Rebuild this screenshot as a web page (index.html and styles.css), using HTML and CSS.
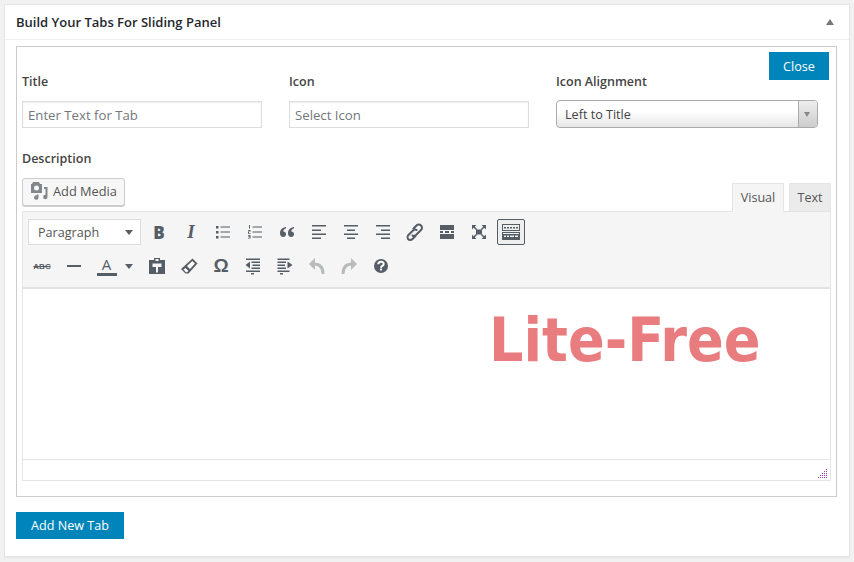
FILE: index.html
```html
<!DOCTYPE html>
<html lang="en">
<head>
    <meta charset="UTF-8">
    <title>Build Your Tabs For Sliding Panel</title>
    <link rel="stylesheet" href="styles.css">
</head>
<body>
    <div class="panel">
        <div class="panelHead">
            <h2 class="panelTitle">Build Your Tabs For Sliding Panel</h2>
            <span class="collapseArrow"></span>
        </div>
        <div class="panelBody">
            <div class="tabBox">
                <div class="closeRow"><button class="blueBtn closeBtn">Close</button></div>
                <div class="fieldRow">
                    <div class="field">
                        <label class="fieldLabel">Title</label>
                        <div class="textInput placeholder">Enter Text for Tab</div>
                    </div>
                    <div class="field">
                        <label class="fieldLabel">Icon</label>
                        <div class="textInput placeholder">Select Icon</div>
                    </div>
                    <div class="field">
                        <label class="fieldLabel">Icon Alignment</label>
                        <div class="selectBox">
                            <span class="selectValue">Left to Title</span>
                            <span class="selectArrow"></span>
                        </div>
                    </div>
                </div>
                <label class="fieldLabel descLabel">Description</label>
                <div class="editorTop">
                    <button class="mediaBtn">
                        <svg width="18" height="18" viewBox="0 0 18 18"><path fill="#82878c" fill-rule="evenodd" d="M3 0h6l1 2h2v9H1V2h1zM6.500 3.500a2.500 2.500 0 1 0 0 5 2.500 2.500 0 0 0 0-5zM14 5h3.500v10a2.200 2.200 0 1 1-2-2.200V7H14zM8.500 12.500v3a2.200 2.200 0 1 1-1.700-2.100v-.900z"/></svg>
                        <span>Add Media</span>
                    </button>
                    <div class="tabs">
                        <span class="tab tabActive">Visual</span>
                        <span class="tab tabPlain">Text</span>
                    </div>
                </div>
                <div class="editor">
                    <div class="toolbar">
                        <div class="toolRow">
                            <div class="formatSelect"><span>Paragraph</span><i class="formatCaret"></i></div>
                            <span class="tool glyph boldGlyph">B</span>
                            <span class="tool glyph italicGlyph">I</span>
                            <span class="tool"><svg width="20" height="20" viewBox="0 0 20 20"><path fill="#555d66" d="M3 4h2.500v2.500H3zM3 9h2.500v2.500H3zM3 14h2.500v2.500H3zM7.500 4.500H17v1H7.500zM7.500 9.500H17v1H7.500zM7.500 14.500H17v1H7.500z"/></svg></span>
                            <span class="tool"><svg width="20" height="20" viewBox="0 0 20 20"><path fill="#555d66" d="M7.500 4.500H17v1H7.500zM7.500 9.500H17v1H7.500zM7.500 14.500H17v1H7.500zM4 3h1v3.500H4zM3 8h2.500v1.800H4V11h1.500v.700H3V9.500h1.500V8.700H3zM3 13h2.500v3.500H3v-.700h1.500V15H3v-.500h1.500v-.800H3z"/></svg></span>
                            <span class="tool"><svg width="20" height="20" viewBox="0 0 20 20"><path fill="#555d66" d="M9 5v1.300C6.800 7 6.300 8.400 6.300 9.500c1.500 0 2.700 1 2.700 2.700 0 1.600-1.200 2.800-2.700 2.800C4.300 15 3 13.400 3 11.200 3 7.700 5.500 5.400 9 5zM17 5v1.300c-2.200.7-2.700 2.100-2.700 3.200 1.500 0 2.700 1 2.700 2.700 0 1.600-1.200 2.800-2.700 2.800-2 0-3.300-1.600-3.300-3.800C11 7.700 13.500 5.400 17 5z"/></svg></span>
                            <span class="tool"><svg width="20" height="20" viewBox="0 0 20 20"><path fill="#555d66" d="M3 3h14v1.500H3zM3 7.500h9V9H3zM3 11.500h14V13H3zM3 15.500h9V17H3z"/></svg></span>
                            <span class="tool"><svg width="20" height="20" viewBox="0 0 20 20"><path fill="#555d66" d="M3 3h14v1.500H3zM6 7.500h8V9H6zM3 11.500h14V13H3zM6 15.500h8V17H6z"/></svg></span>
                            <span class="tool"><svg width="20" height="20" viewBox="0 0 20 20"><path fill="#555d66" d="M3 3h14v1.500H3zM8 7.500h9V9H8zM3 11.500h14V13H3zM8 15.500h9V17H8z"/></svg></span>
                            <span class="tool"><svg width="20" height="20" viewBox="0 0 20 20"><path fill="none" stroke="#555d66" stroke-width="2" stroke-linecap="round" d="M8.500 6.500l3-3a3 3 0 0 1 4.500 0 3 3 0 0 1 0 4.500l-5 5a3 3 0 0 1-3.500.5M11.500 8a3 3 0 0 0-3.500.5l-5 5a3 3 0 0 0 0 3.500 3 3 0 0 0 4.500 0l3-3"/></svg></span>
                            <span class="tool"><svg width="20" height="20" viewBox="0 0 20 20"><path fill="#555d66" d="M3 3h14v5H3zM3 9h3v2H3zM8 9h4v2H8zM14 9h3v2h-3zM3 12h14v5H3z"/></svg></span>
                            <span class="tool"><svg width="20" height="20" viewBox="0 0 20 20"><path fill="#555d66" d="M7 7.500h6v5H7zM3 3h4.500L5.800 4.700 8 7 7 8 4.700 5.800 3 7.500zM17 3v4.500l-1.700-1.700L13 8l-1-1 2.200-2.300L12.500 3zM3 17v-4.500l1.700 1.700L7 12l1 1-2.200 2.300L7.500 17zM17 17h-4.500l1.700-1.700L12 13l1-1 2.300 2.200 1.700-1.700z"/></svg></span>
                            <span class="tool toolOn"><svg width="20" height="18" viewBox="0 0 20 18"><path fill="#555d66" d="M1 1h18v1H1zM1 7h18v1H1zM1 2h1v5H1zM18 2h1v5h-1zM3 4h2v1.500H3zM6 4h2v1.500H6zM9 4h2v1.500H9zM12 4h2v1.500h-2zM15 4h2v1.500h-2zM1 9h18v8H1z"/><path fill="#eee" d="M2 10h16v1H2zM3 12.500h2V14H3zM6 12.500h2V14H6zM9 12.500h4V14H9zM14 12.500h3V14h-3z"/></svg></span>
                        </div>
                        <div class="toolRow">
                            <span class="tool glyph strikeGlyph">ABC</span>
                            <span class="tool"><svg width="20" height="20" viewBox="0 0 20 20"><path fill="#555d66" d="M3 9h14v2H3z"/></svg></span>
                            <span class="tool colorTool">
                                <span class="colorA">A</span>
                                <i class="formatCaret colorCaret"></i>
                            </span>
                            <span class="tool"><svg width="20" height="20" viewBox="0 0 20 20"><path fill="#555d66" fill-rule="evenodd" d="M7 2h6v2h5v14H2V4h5zM8.500 3v2h3V3zM5.500 7.500V11H9v5.500h2V11h3.500V7.500z"/></svg></span>
                            <span class="tool"><svg width="20" height="20" viewBox="0 0 20 20"><path fill="#555d66" d="M13.500 2.500l5 5-9 10H6.500L2 13z"/><path fill="#fff" d="M13.300 5l2.700 2.600-5 5.400-3-2.900zM6.500 12l2.900 2.900-1.600 1.300H7L4.500 13.600z"/></svg></span>
                            <span class="tool glyph omegaGlyph">Ω</span>
                            <span class="tool"><svg width="20" height="20" viewBox="0 0 20 20"><path fill="#555d66" d="M3 2.500h14V4H3zM8.500 5.500H17V7H8.500zM9.500 8.500H17V10H9.500zM8.500 11.500H17V13H8.500zM3 14.500h14V16H3zM8 17h3v1.500H8zM7 5.500v7L2.500 9z"/></svg></span>
                            <span class="tool"><svg width="20" height="20" viewBox="0 0 20 20"><path fill="#555d66" d="M2.500 2.500h12V4h-12zM2.500 5.500H11V7H2.500zM2.500 8.500H10V10H2.500zM2.500 11.500H11V13H2.500zM2.500 14.500h12V16h-12zM5 17h3v1.500H5zM12.500 5.500v7L17.500 9z"/></svg></span>
                            <span class="tool"><svg width="20" height="20" viewBox="0 0 20 20"><path fill="#b8bbbe" d="M2 8l6-6v12z"/><path fill="none" stroke="#b8bbbe" stroke-width="3" d="M7 8c5.500 0 9 3 9 10"/></svg></span>
                            <span class="tool"><svg width="20" height="20" viewBox="0 0 20 20"><path fill="#b8bbbe" d="M18 8l-6-6v12z"/><path fill="none" stroke="#b8bbbe" stroke-width="3" d="M13 8c-5.500 0-9 3-9 10"/></svg></span>
                            <span class="tool"><svg width="20" height="20" viewBox="0 0 20 20"><circle cx="10" cy="10" r="7" fill="#555d66"/><path fill="none" stroke="#fff" stroke-width="2" d="M7.300 8.200c0-3.300 5.400-3.300 5.400-.3 0 2-2.700 1.800-2.700 3.800"/><path fill="#fff" d="M9 12.500h2v2H9z"/></svg></span>
                        </div>
                    </div>
                    <div class="editArea"><span class="liteMark">Lite-Free</span></div>
                    <div class="statusBar">
                        <svg class="resizeGrip" width="10" height="10" viewBox="0 0 10 10" shape-rendering="crispEdges"><path fill="#a03ca6" d="M8 0h1v1H8zM6 2h1v1H6zM8 2h1v1H8zM4 4h1v1H4zM6 4h1v1H6zM8 4h1v1H8zM2 6h1v1H2zM4 6h1v1H4zM6 6h1v1H6zM8 6h1v1H8zM0 8h1v1H0zM2 8h1v1H2zM4 8h1v1H4zM6 8h1v1H6zM8 8h1v1H8z"/></svg>
                    </div>
                </div>
            </div>
            <button class="blueBtn addBtn">Add New Tab</button>
        </div>
    </div>
</body>
</html>
```

FILE: styles.css
```css
*{
    box-sizing: border-box;
}
html, body{
    height: 100%;
}
body{
    margin: 0;
    padding: 4px;
    background-color: #f1f1f1;
    font-family: "Open Sans", sans-serif;
    font-size: 12.6px;
    color: #444;
    overflow: hidden;
}
.panel{
    width: 846px;
    height: 553px;
    background-color: white;
    border: 1px solid #e5e5e5;
    box-shadow: 0 1px 1px rgba(0, 0, 0, 0.04);
}
.panelHead{
    display: flex;
    align-items: center;
    justify-content: space-between;
    height: 35px;
    padding: 0 15px 0 11px;
    border-bottom: 1px solid #eee;
}
.panelTitle{
    margin: 0;
    font-size: 13px;
    font-weight: 600;
    color: #23282d;
}
.collapseArrow{
    width: 0;
    height: 0;
    border-left: 4px solid transparent;
    border-right: 4px solid transparent;
    border-bottom: 6px solid #72777c;
}
.panelBody{
    padding: 6px 12px 0 11px;
}
.tabBox{
    width: 821px;
    height: 451px;
    padding: 5px 5px 0 5px;
    border: 1px solid #ccc;
}
.closeRow{
    display: flex;
    justify-content: flex-end;
    height: 28px;
    padding-right: 2px;
}
.blueBtn{
    border: none;
    background-color: #0085ba;
    color: white;
    font-family: "Open Sans", sans-serif;
    font-size: 12.6px;
    padding: 0;
}
.closeBtn{
    width: 60px;
    height: 28px;
}
.addBtn{
    display: block;
    width: 108px;
    height: 27px;
    margin-top: 15px;
}
.fieldRow{
    display: flex;
    gap: 27px;
    height: 48px;
}
.field{
    width: 240px;
    margin-top: -8px;
}
.fieldLabel{
    display: block;
    height: 20px;
    line-height: 20px;
    font-size: 12.5px;
    font-weight: 600;
    color: #444;
}
.textInput{
    width: 240px;
    height: 27px;
    line-height: 26px;
    margin-top: 9px;
    padding-left: 5px;
    font-size: 13.2px;
    border: 1px solid #ddd;
    box-shadow: inset 0 1px 2px rgba(0, 0, 0, 0.07);
}
.placeholder{
    color: #72777c;
}
.selectBox{
    display: flex;
    justify-content: space-between;
    width: 262px;
    height: 28px;
    margin-top: 8px;
    border: 1px solid #aaa;
    border-radius: 4px;
    background: linear-gradient(#fff 40%, #e6e6e6);
}
.selectValue{
    padding-left: 8px;
    line-height: 27px;
}
.selectArrow{
    position: relative;
    width: 19px;
    border-left: 1px solid #aaa;
    background: linear-gradient(#eee, #ccc);
    border-radius: 0 3px 3px 0;
}
.selectArrow::after{
    content: "";
    position: absolute;
    top: 11px;
    left: 5px;
    border-left: 3.5px solid transparent;
    border-right: 3.5px solid transparent;
    border-top: 5px solid #888;
}
.descLabel{
    margin-top: 21px;
    height: 29px;
}
.editorTop{
    display: flex;
    justify-content: space-between;
    align-items: flex-end;
    height: 33px;
    width: 809px;
}
.mediaBtn{
    display: flex;
    align-items: center;
    gap: 5px;
    align-self: flex-start;
    width: 103px;
    height: 28px;
    padding: 0 0 2px 7px;
    border: 1px solid #ccc;
    border-radius: 3px;
    background-color: #f7f7f7;
    box-shadow: 0 1px 0 #ccc;
    color: #555;
    font-family: "Open Sans", sans-serif;
    font-size: 12.8px;
}
.tabs{
    display: flex;
    gap: 5px;
    margin-bottom: -1px;
    position: relative;
}
.tab{
    height: 29px;
    text-align: center;
    line-height: 27px;
    color: #555;
    background-color: #ebebeb;
    border: 1px solid #e5e5e5;
}
.tabActive{
    width: 52px;
    background-color: #f5f5f5;
    border-bottom-color: #f5f5f5;
}
.tabPlain{
    width: 42px;
}
.editor{
    width: 809px;
    border: 1px solid #e5e5e5;
}
.toolbar{
    height: 77px;
    padding: 7px 3px 0 3px;
    background-color: #f5f5f5;
    border-bottom: 2px solid #e2e2e2;
}
.toolRow{
    display: flex;
    align-items: center;
    height: 26px;
    margin-bottom: 8px;
}
.formatSelect{
    display: flex;
    align-items: center;
    justify-content: space-between;
    width: 113px;
    height: 26px;
    margin: 0 2px;
    padding: 0 7px 0 9px;
    background-color: white;
    border: 1px solid #ddd;
    color: #555;
}
.formatCaret{
    width: 0;
    height: 0;
    border-left: 4px solid transparent;
    border-right: 4px solid transparent;
    border-top: 5px solid #555d66;
}
.tool{
    display: flex;
    align-items: center;
    justify-content: center;
    flex: none;
    width: 32px;
    height: 26px;
    color: #555d66;
}
.toolOn{
    width: 28px;
    margin-left: 2px;
    border: 1px solid #555d66;
    border-radius: 2px;
    background-color: #eee;
}
.glyph{
    font-family: "Liberation Serif", serif;
}
.boldGlyph{
    font-family: "Open Sans", sans-serif;
    font-size: 17px;
    font-weight: 800;
}
.italicGlyph{
    font-size: 19px;
    font-weight: 700;
    font-style: italic;
}
.strikeGlyph{
    font-family: "Liberation Sans", sans-serif;
    font-size: 8px;
    font-weight: 700;
    text-decoration: line-through;
}
.omegaGlyph{
    font-family: "Liberation Sans", sans-serif;
    font-size: 19px;
    font-weight: 700;
}
.colorTool{
    width: 51px;
    gap: 8px;
    padding-right: 2px;
}
.colorA{
    height: 20px;
    width: 20px;
    text-align: center;
    line-height: 17px;
    font-size: 15px;
    border-bottom: 3px solid #555d66;
}
.editArea{
    height: 171px;
    padding: 16px 0 0 466px;
    border-bottom: 1px solid #e5e5e5;
}
.liteMark{
    font-family: "DejaVu Sans", sans-serif;
    font-size: 60.2px;
    font-stretch: condensed;
    line-height: 70px;
    font-weight: 700;
    color: #e87c7e;
}
.statusBar{
    display: flex;
    justify-content: flex-end;
    align-items: flex-end;
    height: 20px;
    padding: 0 2px 1px 0;
}
```
